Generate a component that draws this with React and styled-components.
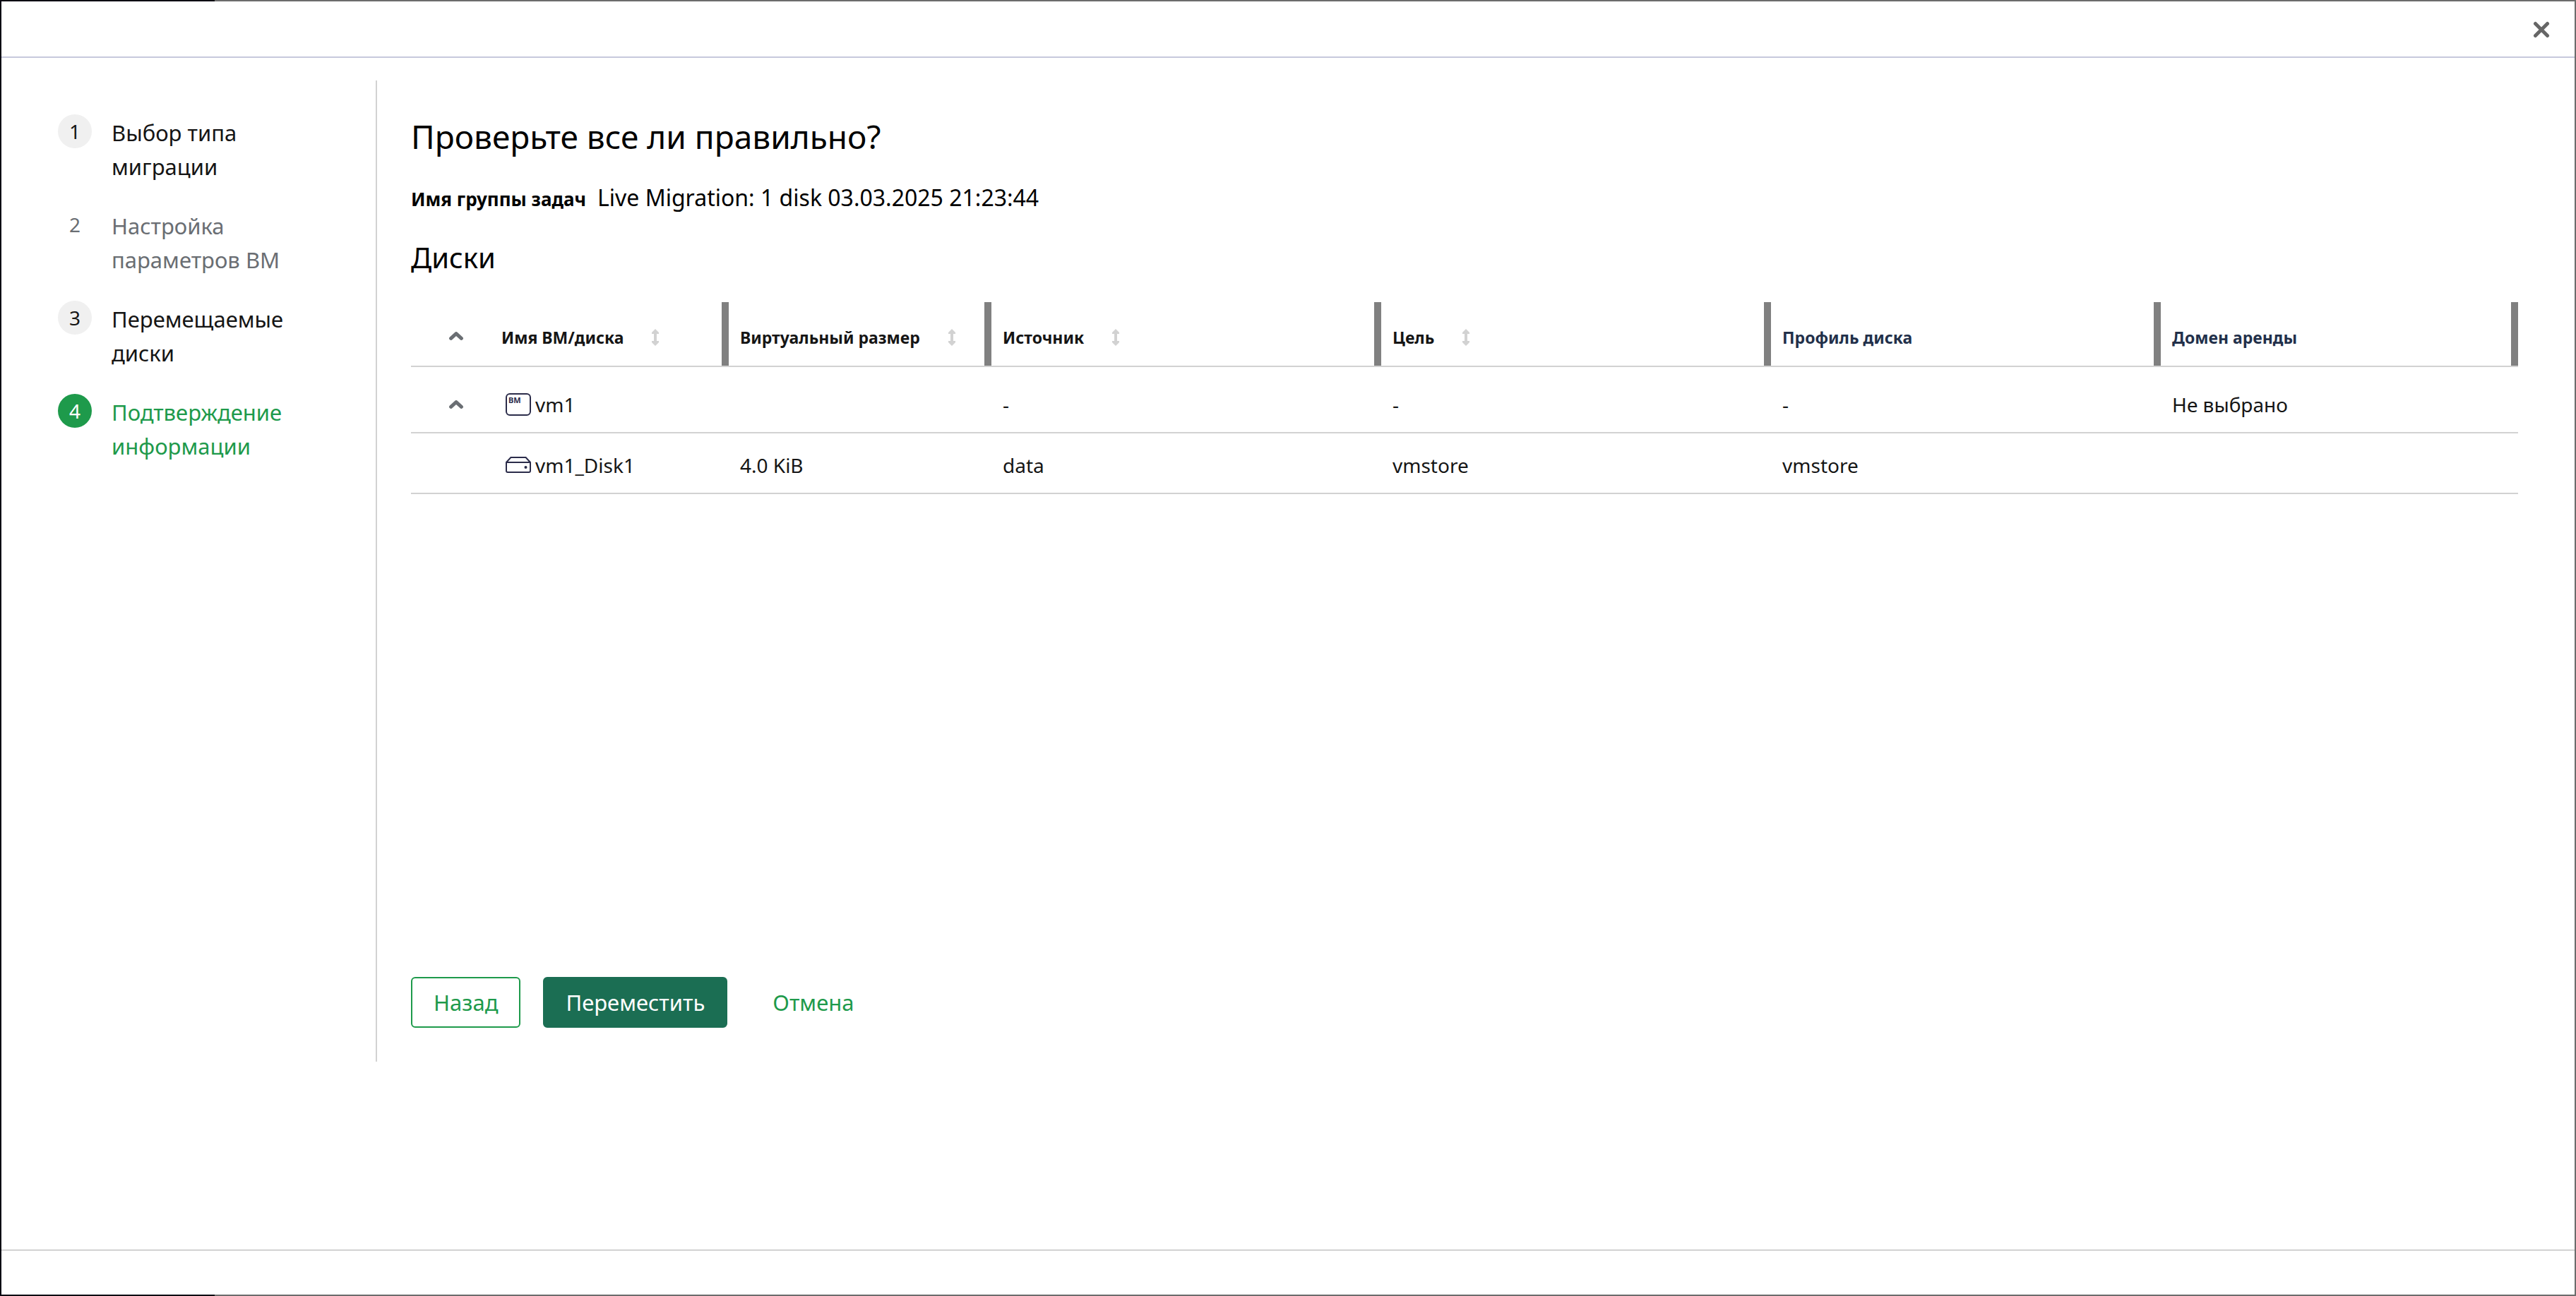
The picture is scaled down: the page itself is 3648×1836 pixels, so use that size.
import styled, { createGlobalStyle } from 'styled-components'

const COLORS = {
	text: '#151515',
	muted: '#6a6e73',
	line: '#d2d2d2',
	green: '#1e9a4b',
	darkGreen: '#1b6e53',
	navy: '#22304a',
	icon: '#2b2c4a',
}

const STEPS = [
	{ label: 'Выбор типа миграции', state: 'done' },
	{ label: 'Настройка параметров ВМ', state: 'disabled' },
	{ label: 'Перемещаемые диски', state: 'done' },
	{ label: 'Подтверждение информации', state: 'current' },
]

const COLUMNS = [
	{ label: 'Имя ВМ/диска', sortable: true, width: '338px' },
	{ label: 'Виртуальный размер', sortable: true, width: '372px' },
	{ label: 'Источник', sortable: true, width: '18.5%' },
	{ label: 'Цель', sortable: true, width: '18.5%' },
	{ label: 'Профиль диска', width: '18.5%' },
	{ label: 'Домен аренды', width: 'auto' },
]

const ChevronUp = () => (
	<svg width='20' height='12' viewBox='0 0 20 12' fill='none' aria-hidden='true'>
		<path d='M2.6 9.4 L10 2.6 L17.4 9.4' stroke={COLORS.muted} strokeWidth='5' strokeLinecap='round' strokeLinejoin='round' />
	</svg>
)

const SortIcon = () => (
	<svg width='10' height='24' viewBox='0 0 10 24' fill={COLORS.line} aria-hidden='true'>
		<path d='M5 0 L10 5 V7 H7 V17 H10 V19 L5 24 L0 19 V17 H3 V7 H0 V5 Z' />
	</svg>
)

const VmIcon = () => (
	<svg width='36' height='32' viewBox='0 0 36 32' fill='none' aria-hidden='true'>
		<rect x='1' y='1' width='34' height='30' rx='5' stroke={COLORS.icon} strokeWidth='2' />
		<text x='4' y='14' fontSize='11' fontWeight='700' fill={COLORS.icon}>ВМ</text>
	</svg>
)

const DiskIcon = () => (
	<svg width='36' height='24' viewBox='0 0 36 24' fill='none' stroke={COLORS.icon} strokeWidth='2' aria-hidden='true'>
		<path d='M1 8 L7.4 1 H28.6 L35 8 V20 Q35 22 33 22 H3 Q1 22 1 20 Z M1 8 H35' />
		<circle cx='28.5' cy='15' r='2' fill={COLORS.icon} stroke='none' />
	</svg>
)

const CloseIcon = () => (
	<svg width='24' height='24' viewBox='0 0 24 24' fill='none' aria-hidden='true'>
		<path d='M3.5 3.5 L20.5 20.5 M20.5 3.5 L3.5 20.5' stroke='#666' strokeWidth='5' strokeLinecap='round' />
	</svg>
)

const Steps = () => (
	<StepNav aria-label='Шаги'>
		<StepList>
			{STEPS.map((step, index) => (
				<Step key={step.label} $state={step.state}>
					<StepButton type='button' disabled={step.state === 'disabled'}>
						<StepNumber $state={step.state}>{index + 1}</StepNumber>
						<StepLabel>{step.label}</StepLabel>
					</StepButton>
				</Step>
			))}
		</StepList>
	</StepNav>
)

const DisksTable = () => (
	<Table>
		<colgroup>
			<Col $width='112px' />
			{COLUMNS.map((column) => (
				<Col key={column.label} $width={column.width} />
			))}
		</colgroup>
		<thead>
			<tr>
				<ToggleHead>
					<IconButton type='button' aria-label='Свернуть все'>
						<ChevronUp />
					</IconButton>
				</ToggleHead>
				{COLUMNS.map((column) => (
					<Head key={column.label} scope='col' $sortable={column.sortable}>
						{column.sortable ? (
							<SortButton type='button'>
								{column.label}
								<SortIcon />
							</SortButton>
						) : (
							column.label
						)}
					</Head>
				))}
			</tr>
		</thead>
		<tbody>
			<Row $group>
				<ToggleCell>
					<IconButton type='button' aria-label='Свернуть vm1'>
						<ChevronUp />
					</IconButton>
				</ToggleCell>
				<Cell>
					<Name>
						<VmIcon />
						vm1
					</Name>
				</Cell>
				<Cell />
				<Cell>-</Cell>
				<Cell>-</Cell>
				<Cell>-</Cell>
				<Cell>Не выбрано</Cell>
			</Row>
			<Row>
				<Cell />
				<Cell>
					<Name>
						<DiskIcon />
						vm1_Disk1
					</Name>
				</Cell>
				<Cell>4.0 KiB</Cell>
				<Cell>data</Cell>
				<Cell>vmstore</Cell>
				<Cell>vmstore</Cell>
				<Cell />
			</Row>
		</tbody>
	</Table>
)

const App = () => (
	<>
		<GlobalStyle />
		<Backdrop>
			<Dialog role='dialog' aria-labelledby='title'>
				<DialogHeader>
					<IconButton type='button' aria-label='Закрыть'>
						<CloseIcon />
					</IconButton>
				</DialogHeader>
				<Wizard>
					<Steps />
					<Main>
						<Title id='title'>Проверьте все ли правильно?</Title>
						<TaskGroup>
							<dt>Имя группы задач</dt>
							<dd>Live Migration: 1 disk 03.03.2025 21:23:44</dd>
						</TaskGroup>
						<Subtitle>Диски</Subtitle>
						<DisksTable />
						<Actions>
							<Button type='button'>Назад</Button>
							<Button type='button' $variant='primary'>Переместить</Button>
							<Button type='button' $variant='link'>Отмена</Button>
						</Actions>
					</Main>
				</Wizard>
				<DialogFooter />
			</Dialog>
		</Backdrop>
	</>
)

const GlobalStyle = createGlobalStyle`
	* {
		box-sizing: border-box;
	}

	body {
		margin: 0;
		color: ${COLORS.text};
		font-family: 'Noto Sans', sans-serif;
	}

	button {
		font: inherit;
		color: inherit;
		border: none;
		background: none;
		padding: 0;
		cursor: pointer;
	}

	svg {
		display: block;
		flex: none;
	}
`

const Backdrop = styled.div`
	display: flex;
	min-height: 100vh;
	padding: 2px;
	background: linear-gradient(90deg, #0a0812 304px, #6c6c6c 304px);
`

const Dialog = styled.section`
	display: flex;
	flex-direction: column;
	flex: 1;
	min-width: 0;
	background: #fff;
`

const DialogHeader = styled.header`
	display: flex;
	align-items: center;
	justify-content: flex-end;
	height: 80px;
	padding: 2px 35px 0 0;
	border-bottom: 2px solid #c7c9dc;
`

const DialogFooter = styled.footer`
	height: 64px;
	border-top: 2px solid ${COLORS.line};
`

const Wizard = styled.div`
	display: flex;
	flex: 1;
	padding: 32px 80px 266px;
`

const StepNav = styled.nav`
	flex: none;
	width: 452px;
	padding-top: 48px;
	border-right: 2px solid ${COLORS.line};
`

const StepList = styled.ol`
	display: flex;
	flex-direction: column;
	gap: 36px;
	margin: 0;
	padding: 0;
	list-style: none;
`

const STEP_COLORS = {
	done: COLORS.text,
	disabled: COLORS.muted,
	current: COLORS.green,
}

const Step = styled.li`
	color: ${({ $state }) => STEP_COLORS[$state]};
`

const StepButton = styled.button`
	display: flex;
	align-items: flex-start;
	gap: 28px;
	text-align: left;
`

const StepNumber = styled.span`
	flex: none;
	width: 48px;
	border-radius: 50%;
	font-size: 28px;
	line-height: 48px;
	text-align: center;
	background: ${({ $state }) => ({ done: '#f0f0f0', current: COLORS.green })[$state] || 'none'};
	color: ${({ $state }) => ($state === 'current' ? '#fff' : 'inherit')};
`

const StepLabel = styled.span`
	max-width: 270px;
	padding-top: 2px;
	margin-bottom: -2px;
	font-size: 31px;
	line-height: 48px;
`

const Main = styled.main`
	display: flex;
	flex-direction: column;
	flex: 1;
	min-width: 0;
	padding: 48px 0 48px 48px;
	color: #000;
`

const Title = styled.h1`
	margin: 0;
	font-size: 46px;
	font-weight: 400;
	line-height: 62px;
`

const TaskGroup = styled.dl`
	display: flex;
	align-items: baseline;
	gap: 16px;
	margin: 32px 0;
	line-height: 48px;

	dt {
		font-size: 26px;
		font-weight: 700;
	}

	dd {
		margin: 0;
		font-size: 32px;
	}
`

const Subtitle = styled.h2`
	margin: 0 0 36px;
	font-size: 40px;
	font-weight: 400;
	line-height: 54px;
`

const Table = styled.table`
	width: 100%;
	table-layout: fixed;
	border-collapse: separate;
	border-spacing: 0;
	color: ${COLORS.text};
`

const Col = styled.col`
	width: ${({ $width }) => $width};
`

const Head = styled.th`
	padding: 32px 6px 22px 16px;
	border-bottom: 2px solid ${COLORS.line};
	background: linear-gradient(gray, gray) right / 10px 100% no-repeat;
	background-origin: padding-box;
	background-clip: padding-box;
	color: ${({ $sortable }) => ($sortable ? COLORS.text : COLORS.navy)};
	font-size: 23px;
	font-weight: 700;
	line-height: 36px;
	text-align: left;
	white-space: nowrap;
`

const ToggleHead = styled.td`
	padding: 42px 0 36px 54px;
	border-bottom: 2px solid ${COLORS.line};
	vertical-align: top;
`

const SortButton = styled.button`
	display: flex;
	align-items: center;
	gap: 40px;
`

const IconButton = styled.button`
	display: block;
`

const Cell = styled.td`
	padding: 24px 16px 18px;
	border-bottom: 2px solid ${COLORS.line};
	font-size: 28px;
	line-height: 42px;
`

const ToggleCell = styled(Cell)`
	padding-left: 54px;
`

const Row = styled.tr`
	${Cell} {
		padding-top: ${({ $group }) => ($group ? '32px' : '24px')};
	}
`

const Name = styled.span`
	display: flex;
	align-items: center;
	gap: 6px;
	padding-left: 6px;
`

const Actions = styled.footer`
	display: flex;
	gap: 32px;
	margin-top: auto;
`

const VARIANTS = {
	primary: `
		border-color: ${COLORS.darkGreen};
		background: ${COLORS.darkGreen};
		color: #fff;
	`,
	link: `
		border-color: transparent;
	`,
}

const Button = styled.button`
	padding: 10px 30px;
	border: 2px solid ${COLORS.green};
	border-radius: 6px;
	color: ${COLORS.green};
	font-size: 31px;
	line-height: 48px;
	${({ $variant }) => VARIANTS[$variant]}
`

export default App
